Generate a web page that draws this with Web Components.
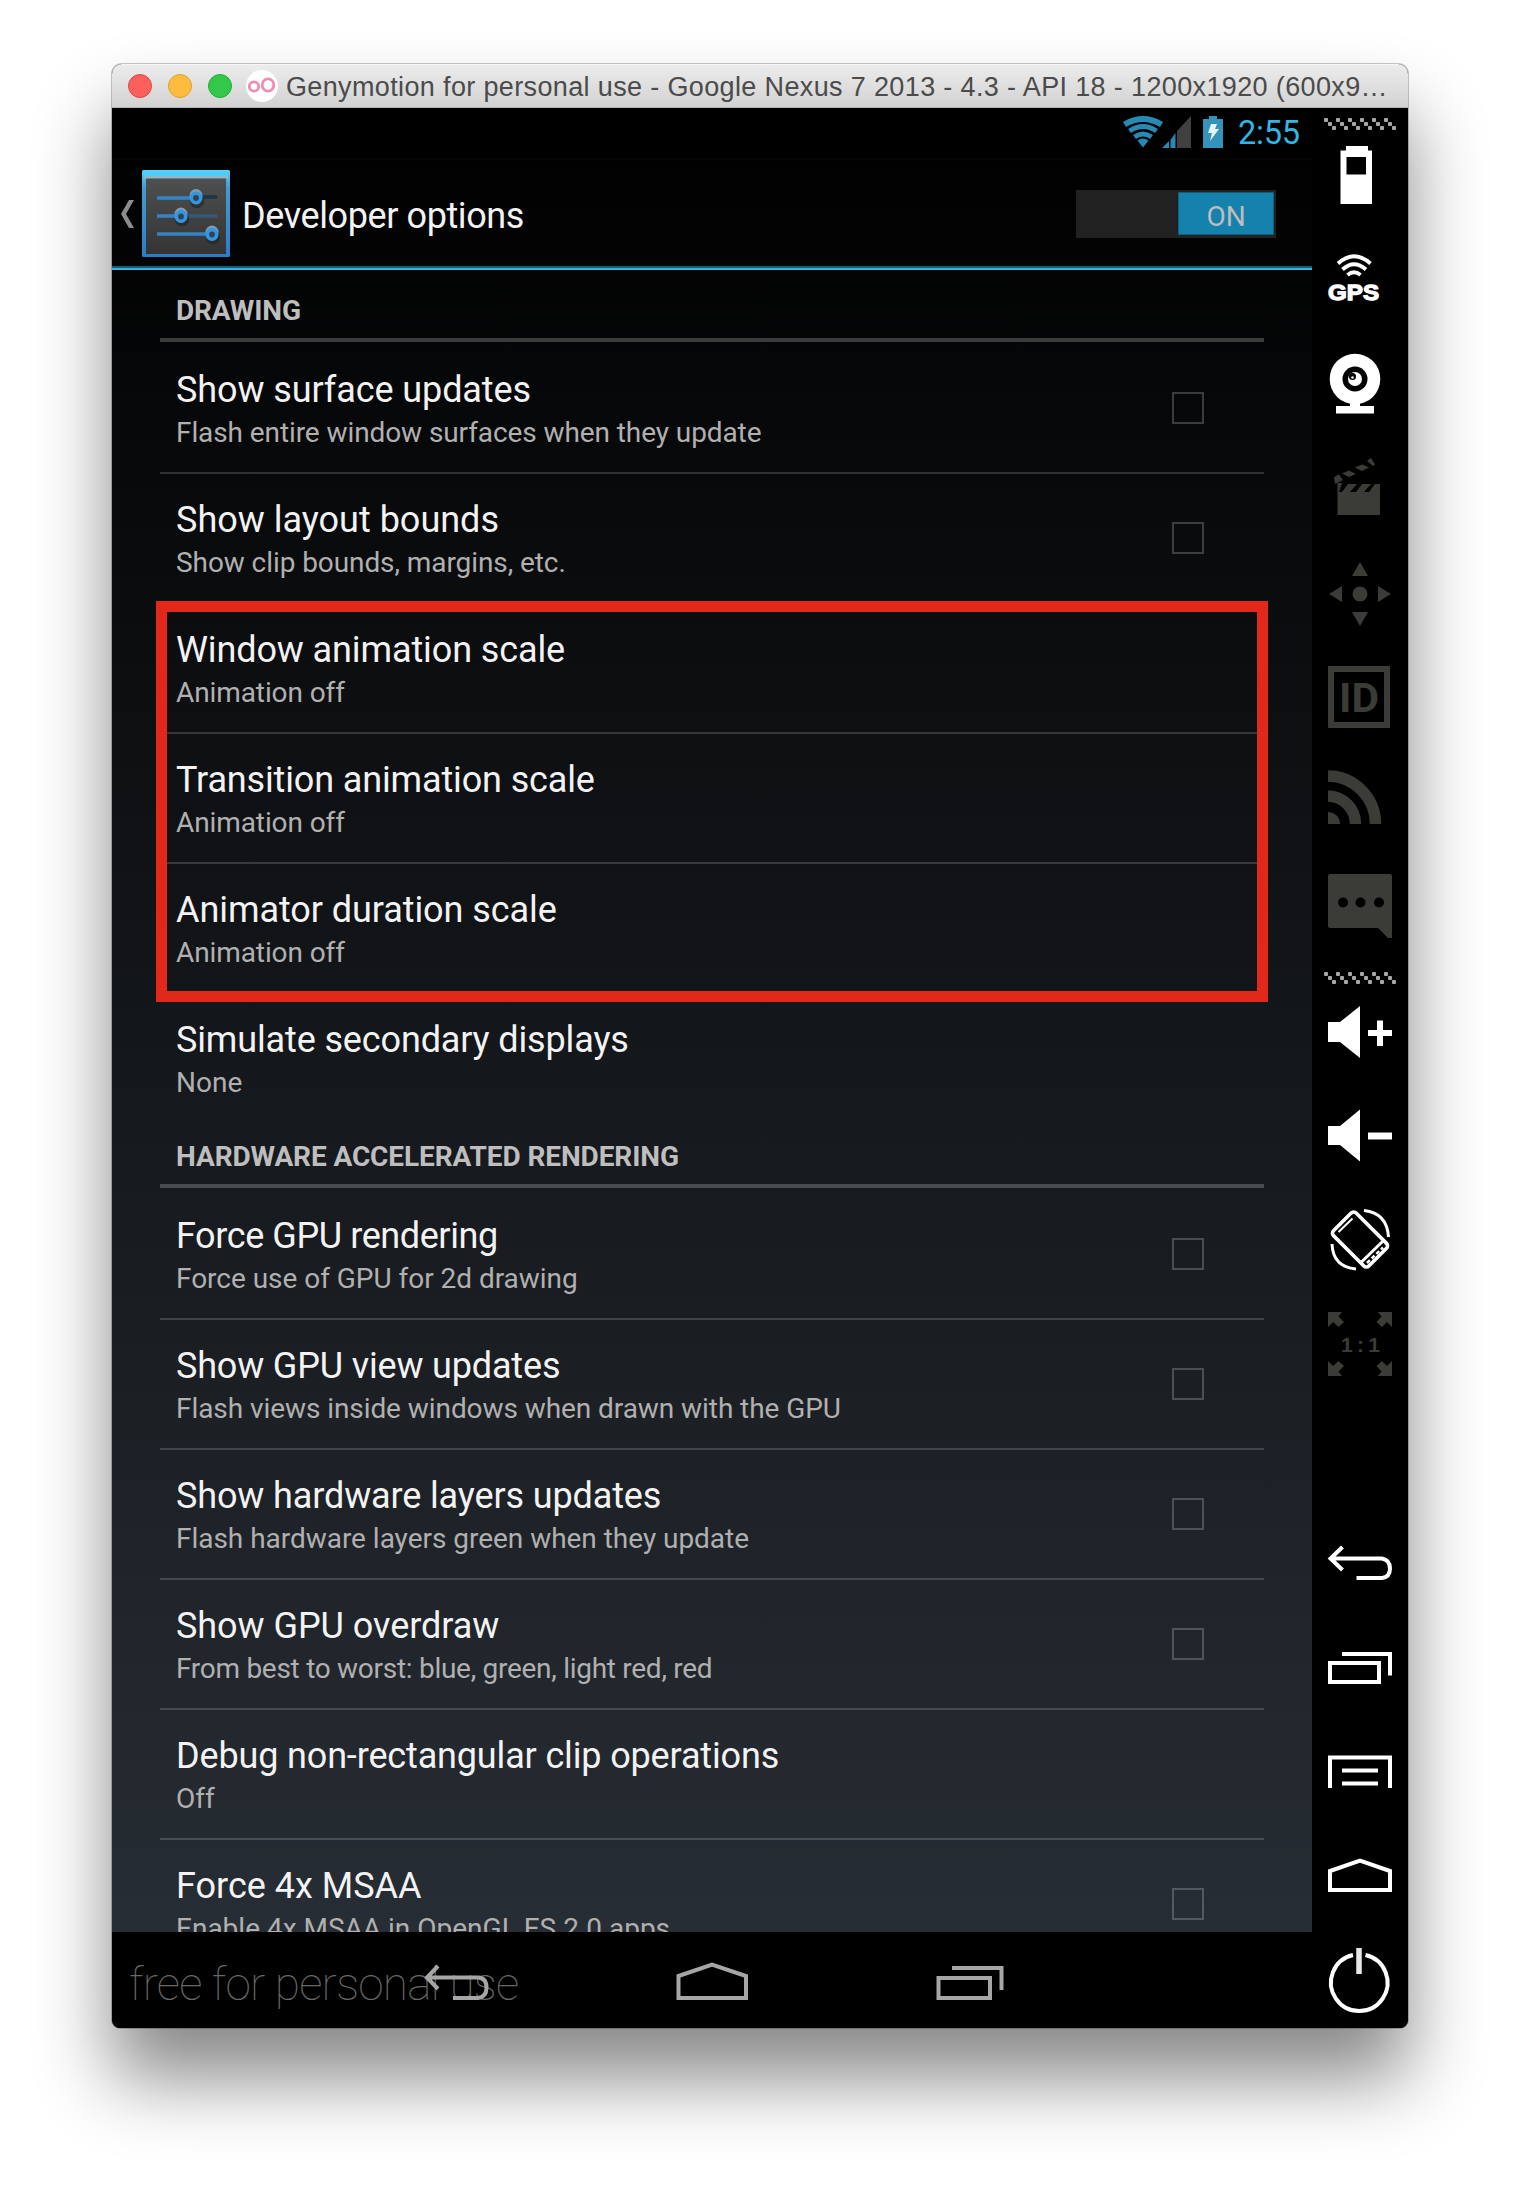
<!DOCTYPE html>
<html lang="en">
<head>
<meta charset="utf-8">
<title>Developer options</title>
<style>
html,body{margin:0;padding:0;background:#fff}
body{width:1520px;height:2188px;overflow:hidden;font-family:Roboto,sans-serif}
</style>
</head>
<body>
<emulator-window>
  <title-bar slot="title">Genymotion for personal use - Google Nexus 7 2013 - 4.3 - API 18 - 1200x1920 (600x9…</title-bar>
  <device-screen slot="screen">
    <status-bar slot="status" time="2:55"></status-bar>
    <action-bar slot="action">Developer options</action-bar>
    <pref-header style="--t:-.14px">DRAWING</pref-header>
    <pref-row style="--t:-.1px;--s:-.09px" check summary="Flash entire window surfaces when they update">Show surface updates</pref-row>
    <pref-row style="--s:-.08px" check summary="Show clip bounds, margins, etc.">Show layout bounds</pref-row>
    <pref-group>
      <pref-row style="--t:-.11px;--s:-.1px" summary="Animation off">Window animation scale</pref-row>
      <pref-row style="--t:-.14px;--s:-.1px" summary="Animation off">Transition animation scale</pref-row>
      <pref-row style="--t:-.07px;--s:-.1px" summary="Animation off">Animator duration scale</pref-row>
    </pref-group>
    <pref-row style="--t:-.14px" last summary="None">Simulate secondary displays</pref-row>
    <pref-header style="--t:-.1px">HARDWARE ACCELERATED RENDERING</pref-header>
    <pref-row style="--t:-.41px;--s:-.03px" check summary="Force use of GPU for 2d drawing">Force GPU rendering</pref-row>
    <pref-row style="--t:-.17px;--s:-.07px" check summary="Flash views inside windows when drawn with the GPU">Show GPU view updates</pref-row>
    <pref-row style="--t:-.13px;--s:-.03px" check summary="Flash hardware layers green when they update">Show hardware layers updates</pref-row>
    <pref-row style="--t:-.05px;--s:-.28px" check summary="From best to worst: blue, green, light red, red">Show GPU overdraw</pref-row>
    <pref-row style="--t:-.15px" summary="Off">Debug non-rectangular clip operations</pref-row>
    <pref-row check summary="Enable 4x MSAA in OpenGL ES 2.0 apps">Force 4x MSAA</pref-row>
    <nav-bar slot="nav">free for personal use</nav-bar>
  </device-screen>
  <tool-bar slot="tools"></tool-bar>
</emulator-window>
<script>
const define = (name, html) => {
  const t = document.createElement('template');
  t.innerHTML = html;
  customElements.define(name, class extends HTMLElement {
    connectedCallback() {
      if (this.shadowRoot) return;
      const root = this.attachShadow({mode: 'open'});
      root.append(t.content.cloneNode(true));
      root.querySelectorAll('[data-attr]').forEach(n => n.textContent = this.getAttribute(n.dataset.attr));
    }
  });
};

define('emulator-window', `<style>
:host{display:block;padding:64px 112px 0}
.win{width:1296px;border-radius:10px 10px 8px 8px;box-shadow:0 0 0 1px rgba(0,0,0,.22),0 50px 76px rgba(0,0,0,.47)}
.clip{border-radius:10px 10px 8px 8px;overflow:hidden;background:#000}
.body{display:flex}
</style><div class="win"><div class="clip"><slot name="title"></slot><div class="body"><slot name="screen"></slot><slot name="tools"></slot></div></div></div>`);

define('title-bar', `<style>
:host{display:flex;align-items:center;height:44px;box-sizing:border-box;padding-left:16px;background:linear-gradient(#ececec,#d2d2d2);border-top:1px solid #f6f6f6;border-bottom:1px solid #b4b4b4}
i{width:22px;height:22px;border-radius:50%;margin-right:16px;border:1px solid}
.r{background:#fc605c;border-color:#e2453f}.y{background:#fdbc40;border-color:#dfa023}.g{background:#34c84a;border-color:#24ab33;margin-right:14px}
svg{flex:none}
span{margin-left:8px;font:27px/42px "Liberation Sans",sans-serif;color:#4b4b4b;white-space:nowrap;letter-spacing:.36px;padding-top:1px}
</style><i class="r"></i><i class="y"></i><i class="g"></i>
<svg width="32" height="32" viewBox="0 0 32 32"><circle cx="16" cy="16" r="16" fill="#fff"/><g fill="none" stroke="#f08cb0" stroke-width="2.8"><circle cx="8" cy="16.5" r="4.7"/><ellipse cx="22" cy="15" rx="5.8" ry="6.2"/></g></svg>
<span><slot></slot></span>`);

define('device-screen', `<style>
:host{display:flex;flex-direction:column;width:1200px;height:1920px;flex:none}
.app{height:1824px;background:linear-gradient(#000,#272d34);overflow:hidden}
.list{padding:4px 48px 0}
</style><div class="app"><slot name="status"></slot><slot name="action"></slot><div class="list"><slot></slot></div></div><slot name="nav"></slot>`);

define('status-bar', `<style>
:host{display:flex;height:50px;background:#000;justify-content:flex-end;padding-right:12px}
span{font-size:32.5px;line-height:51px;color:#33b5e5;width:62px;margin-left:14px;letter-spacing:-.2px}
</style>
<svg width="102" height="50" viewBox="1123 108 102 50">
<g fill="none" stroke="#278ab5" stroke-width="5"><path d="M1125.500 124.500Q1144 113.500 1162.500 124.500" stroke-width="6"/><path d="M1130.500 131Q1144 122 1157.500 131"/><path d="M1135.500 137Q1144 131 1152.500 137"/></g>
<path d="M1138.500 140.500Q1144 136.500 1149.500 140.500L1144 147.500Z" fill="#278ab5"/>
<path d="M1178 148V131L1192 116V148Z" fill="#404040"/><path d="M1163 148L1170 141V148ZM1171.500 148V139.500L1173 138L1176.500 133V148Z" fill="#278ab5"/>
<path d="M1204 148V119H1210V116H1218V119H1224V148Z" fill="#3393bb"/><path d="M1212 124H1218L1216 129H1220L1211 141L1213 133H1209Z" fill="#e8f4f8"/>
</svg><span data-attr="time"></span>`);

define('action-bar', `<style>
:host{display:flex;align-items:center;height:112px;box-sizing:border-box;border-bottom:2px solid #33b5e5;box-shadow:inset 0 -2px #155c77,inset 0 2px #060606;padding:2px 36px 0 8px}
svg{align-self:flex-start;margin-top:-2px;flex:none}
.t{font-size:36px;line-height:42px;color:#f3f3f3;margin-left:10px;flex:1;padding-top:4px;letter-spacing:-.4px}
.sw{width:200px;height:48px;background:#212121;display:flex;justify-content:flex-end}
b{width:94px;height:41px;margin:2px 2px 0;border:1px solid #0e5f7e;background:#1482ad;color:#bdbdbd;font:400 28px/47px Roboto,sans-serif;text-align:center}
</style>
<svg width="112" height="110" viewBox="120 158 112 110">
<defs><linearGradient id="e" x2="0" y2="1"><stop stop-color="#5ad2fb"/><stop offset=".2" stop-color="#419bd0"/><stop offset="1" stop-color="#2b7cc9"/></linearGradient><linearGradient id="f" x2="0" y2="1"><stop stop-color="#4e4f4f"/><stop offset="1" stop-color="#343434"/></linearGradient></defs>
<path d="M134 200H129L121 214L129 228H134L126 214Z" fill="#8c8c8c"/>
<rect x="142" y="170" width="88" height="87" rx="1.500" fill="url(#e)"/><rect x="144" y="172" width="84" height="5" fill="#50ccff"/><rect x="144" y="176" width="84" height="2.500" fill="#99b3c2"/><rect x="146" y="178.500" width="80" height="75.500" fill="url(#f)"/>
<g fill="none" stroke-width="3.600"><path d="M157 198H196M157 216H181M157 234H212" stroke="#3483c6"/><path d="M196 197H217" stroke="#1e3544" /><path d="M181 216H217" stroke="#36597a"/>
<g stroke="#222" stroke-opacity=".6"><circle cx="197" cy="201" r="5.500"/><circle cx="182" cy="219" r="5.500"/><circle cx="213" cy="237" r="5.500"/></g>
<g stroke="#7d9cb5" stroke-width="3"><circle cx="196" cy="195.500" r="5"/><circle cx="181" cy="214" r="5"/><circle cx="212" cy="232" r="5"/></g>
<g stroke="#2f97e3" fill="#35424d"><circle cx="196" cy="198" r="4.700"/><circle cx="181" cy="216.500" r="4.700"/><circle cx="212" cy="234.500" r="4.700"/></g></g>
</svg><span class="t"><slot></slot></span><div class="sw"><b>ON</b></div>`);

define('pref-header', `<style>
:host{display:block;height:68px;box-sizing:border-box;padding:20px 0 0 16px;margin-bottom:2px;border-bottom:4px solid rgba(255,255,255,.22);font:700 28px/33px Roboto,sans-serif;color:#bebebe;letter-spacing:var(--t,0)}
</style><slot></slot>`);

define('pref-row', `<style>
:host{display:flex;justify-content:space-between;height:130px;box-sizing:border-box;border-bottom:2px solid rgba(255,255,255,.165);padding:25px 60px 0 16px;white-space:nowrap}
:host([last]){height:128px;border:0;margin-bottom:-2px}
.t{font-size:36px;line-height:42px;color:#f3f3f3;letter-spacing:var(--t,0)}
.s{font-size:28px;line-height:34px;margin-top:5px;color:#b0b0b0;letter-spacing:var(--s,0)}
.c{display:none;width:28px;height:28px;border:2px solid rgba(255,255,255,.21);margin-top:23px}
:host([check]) .c{display:block}
</style><div><div class="t"><slot></slot></div><div class="s" data-attr="summary"></div></div><div class="c"></div>`);

define('pref-group', `<style>
:host{display:block;position:relative}
i{position:absolute;left:-4px;top:-3px;width:1112px;height:401px;box-sizing:border-box;border:11px solid #e22819}
</style><slot></slot><i></i>`);

define('nav-bar', `<style>
:host{display:block;position:relative;height:96px;background:#000}
span{position:absolute;left:17px;top:23.6px;font-size:46px;line-height:56px;font-weight:100;color:#686868;white-space:nowrap;letter-spacing:-.8px}
svg{display:block;position:relative}
</style><span><slot></slot></span>
<svg width="1200" height="96" viewBox="112 1932 1200 96" fill="none" stroke="#a6a6a6" stroke-width="4">
<path d="M438 1966L427 1977.500L438 1989M427 1977.500H478Q486.500 1978 486.500 1987.500Q486.500 1997 478 1998H453"/>
<path d="M678.500 1998V1976L712 1964.500L746 1976V1998Z"/>
<path d="M938.500 1978H990V1998H938.500ZM952 1968H1001.500V1990"/></svg>`);

const W = 'fill="#fff"', G = 'fill="#3b3c37"';
const grip = y => { let s = ''; for (let i = 0; i < 6; i++) for (let k = 0; k < 3; k++) s += `<rect x="${1324 + i*12 + k*4}" y="${y + k*4}" width="4" height="4" rx="1"/>`; return `<g fill="#a8a8a8">${s}</g>`; };
const cells = [
 [108,134, grip(118)],
 [134,216, `<path ${W} fill-rule="evenodd" d="M1340.500 150.500H1346V146H1368V150.500H1372V204H1340.500ZM1346.500 157V174.500H1366V157Z"/>`],
 [216,320, `<g fill="none" stroke="#fff" stroke-width="3.800"><path d="M1338 263.500Q1354 249 1370.500 263.500"/><path d="M1342.500 269.500Q1354 259 1366 269.500"/><path d="M1347.500 275Q1354 269.500 1360.500 275"/></g><text x="1328" y="300" ${W} stroke="#fff" stroke-width="1.300" font-family="Liberation Sans,sans-serif" font-weight="700" font-size="22" textLength="51" lengthAdjust="spacingAndGlyphs">GPS</text>`],
 [320,436, `<circle cx="1355" cy="379" r="25.300" ${W}/><path ${W} d="M1350 402H1360V406H1374V413.500H1336V406H1350Z"/><circle cx="1355" cy="379" r="12.500"/><circle cx="1355" cy="379" r="7" ${W}/><circle cx="1352.500" cy="376.500" r="3.500"/><circle cx="1352.500" cy="377.500" r="1.300" ${W}/>`],
 [436,540, `<g ${G}><path d="M1338 483H1342L1339 492H1380V515H1337.500V478ZM1348 484H1357L1350 492H1342ZM1362 484H1371L1364 492H1356ZM1375 484H1380V492H1369Z"/><path d="M1334 477L1339 474.500L1343 480L1335 484ZM1342 473.500L1349 470.500L1356 474L1349 477ZM1355 467.500L1362 464.500L1369 467.500L1362 471ZM1367 461L1371 458L1375 464.500L1373 466Z"/></g>`],
 [540,650, `<g ${G}><circle cx="1360" cy="594" r="7.500"/><path d="M1352 576H1368L1360 562ZM1352 612H1368L1360 626ZM1342 586V602L1329 594ZM1378 586V602L1391 594Z"/></g>`],
 [650,745, `<rect x="1331" y="669" width="56" height="56" fill="none" stroke="#3b3c37" stroke-width="6"/><text x="1339" y="712" ${G} font-family="Roboto,sans-serif" font-weight="700" font-size="40" textLength="40" lengthAdjust="spacingAndGlyphs">ID</text>`],
 [745,850, `<path d="M1328 776A48 48 0 0 1 1375.500 824M1328 796A28 28 0 0 1 1355.500 824" fill="none" stroke="#3b3c37" stroke-width="11.500"/><path ${G} d="M1328 812A12 12 0 0 1 1340 824H1328Z"/>`],
 [850,960, `<path ${G} d="M1330 874H1390Q1392 874 1392 876V938H1388L1378 928H1330Q1328 928 1328 926V876Q1328 874 1330 874Z"/><g fill="#000"><circle cx="1343" cy="902.500" r="5"/><circle cx="1360.500" cy="902.500" r="5"/><circle cx="1379" cy="902.500" r="5"/></g>`],
 [960,990, grip(972)],
 [990,1080, `<path ${W} d="M1328 1022H1340L1360 1006V1058L1340 1042H1328ZM1368 1030H1377V1020.500H1383V1030H1392V1036H1383V1046H1377V1036H1368Z"/>`],
 [1080,1180, `<path ${W} d="M1328 1126H1340L1360 1109.500V1161.500L1340 1145H1328ZM1368 1132.500H1392V1139.500H1368Z"/>`],
 [1180,1290, `<g fill="none" stroke="#fff" stroke-width="3.600"><rect x="-25" y="-16" width="50" height="32" rx="3.500" transform="translate(1360 1239.500) rotate(45)"/><path stroke-width="3" d="M1364 1210.500Q1387 1213 1388.500 1237M1332 1244Q1333 1267 1356 1269"/><path stroke-width="2" d="M1338.500 1232L1352.500 1218.500"/><path stroke-width="3" d="M1361.500 1262L1382.500 1241.500"/><path stroke-width="2.500" stroke-dasharray="4 2.500" d="M1367 1263L1383 1247.500"/></g>`],
 [1290,1400, `<g ${G}><path d="M1328 1312H1342L1338.500 1316.500L1344 1322L1338.500 1327L1333 1322L1328 1327Z"/><path d="M1392 1312H1378L1381.500 1316.500L1376.500 1322L1382 1327L1387 1322L1392 1327Z"/><path d="M1328 1376H1342L1338.500 1371.500L1344 1366L1338.500 1361L1333 1366L1328 1361Z"/><path d="M1392 1376H1378L1381.500 1371.500L1376.500 1366L1382 1361L1387 1366L1392 1361Z"/><text x="1341" y="1352" font-family="Liberation Sans,sans-serif" font-weight="700" font-size="21" textLength="39">1:1</text></g>`],
 [1400,1520, ``],
 [1520,1600, `<path fill="none" stroke="#fff" stroke-width="4" d="M1342.500 1547L1330.500 1558.500L1342.500 1570M1330.500 1558.500H1382Q1390 1560 1390 1568.500Q1390 1577 1382 1578H1356.500"/>`],
 [1600,1720, `<path fill="none" stroke="#fff" stroke-width="4" d="M1330 1663H1379V1682H1330ZM1342 1654H1390V1675.500"/>`],
 [1720,1820, `<path fill="none" stroke="#fff" stroke-width="4" d="M1330 1788V1757.500H1390V1788M1342 1770.500H1378M1342 1783.500H1378"/>`],
 [1820,1920, `<path fill="none" stroke="#fff" stroke-width="4" d="M1330 1890V1871L1360 1860.500L1390 1871V1890Z"/>`],
 [1920,2028, `<path fill="none" stroke="#fff" stroke-width="4" d="M1353 1955A28.300 28.300 0 1 0 1365.500 1955"/><path stroke="#e8e8e8" stroke-width="5.500" d="M1359 1948V1974"/>`]
];
define('tool-bar', `<style>:host{display:flex;flex-direction:column;width:96px;background:#000}svg{display:block;flex:none}</style>` +
  cells.map(([a, b, s]) => `<svg width="96" height="${b - a}" viewBox="1312 ${a} 96 ${b - a}">${s}</svg>`).join(''));
</script>
</body>
</html>
